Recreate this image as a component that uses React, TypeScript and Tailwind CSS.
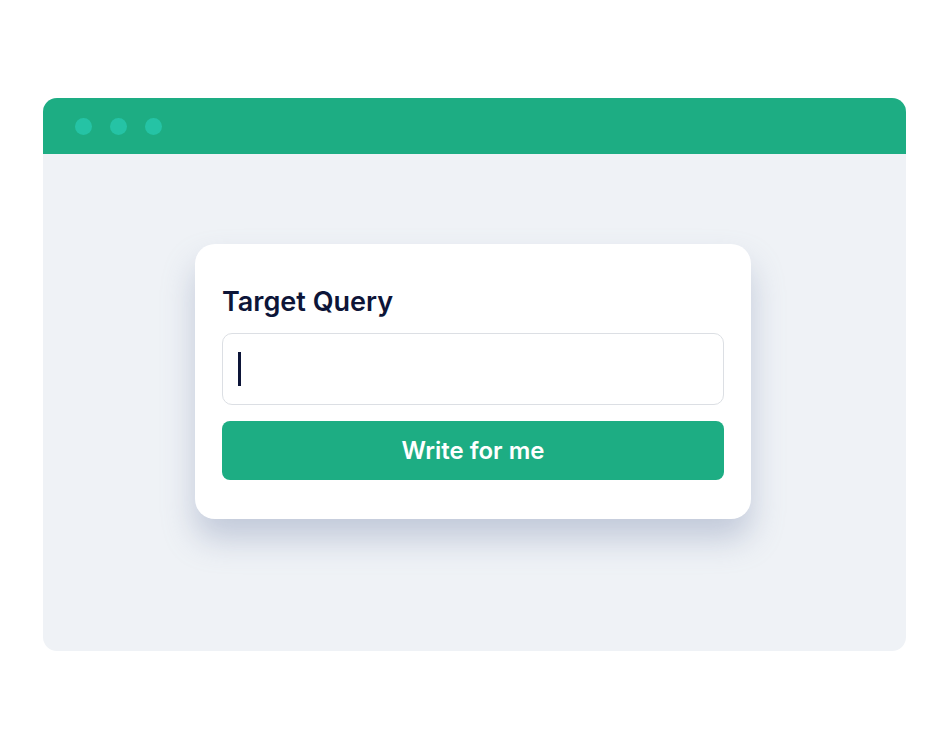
export default function App() {
  return (
    <div className="w-[950px] h-[750px] bg-white pt-[98px] pl-[43px]" style={{ fontFamily: "Inter, 'Liberation Sans', sans-serif" }}>
      <div className="w-[863px] h-[553px] rounded-[14px] overflow-hidden bg-[#eff2f6] flex flex-col">
        <div className="h-[56px] bg-[#1dad83] flex items-center gap-[18px] pl-[32px]">
          <span className="w-[17px] h-[17px] rounded-full bg-[#25c3a5]" />
          <span className="w-[17px] h-[17px] rounded-full bg-[#25c3a5]" />
          <span className="w-[17px] h-[17px] rounded-full bg-[#25c3a5]" />
        </div>
        <div className="pl-[152px] pt-[90px]">
          <div className="w-[556px] h-[275px] bg-white rounded-[20px] shadow-[0_20px_32px_rgba(140,152,185,0.45)] px-[27px] pt-[43px] flex flex-col">
            <h1 className="text-[27px] leading-[30px] font-semibold text-[#0d1538]">Target Query</h1>
            <div className="mt-[16px] h-[72px] rounded-[10px] border border-[#dcdfe4] flex items-center pl-[15px]">
              <span className="w-[3px] h-[34px] bg-[#0d1538]" />
            </div>
            <button className="mt-[16px] h-[59px] rounded-[8px] bg-[#1dad83] text-white text-[24px] font-semibold">
              Write for me
            </button>
          </div>
        </div>
      </div>
    </div>
  );
}
